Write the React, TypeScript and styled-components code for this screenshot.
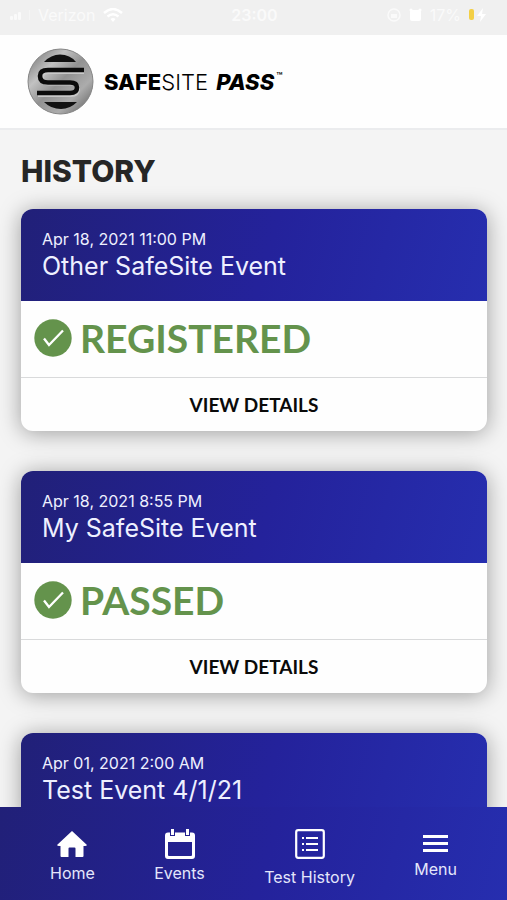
import React from "react";
import styled, { createGlobalStyle } from "styled-components";

const GlobalStyle = createGlobalStyle`
  *, *::before, *::after { box-sizing: border-box; }
  body {
    margin: 0;
    font-family: Inter, "Liberation Sans", sans-serif;
    background: #f4f4f4;
  }
`;

const Screen = styled.div`
  display: flex;
  flex-direction: column;
  height: 100vh;
  overflow: hidden;
`;

const StatusBar = styled.div`
  display: grid;
  grid-template-columns: 1fr auto 1fr;
  align-items: center;
  flex: none;
  height: 35px;
  padding: 0 20px 5px 10px;
  background: #f0f0f0;
  color: #fafafa;
  font-size: 16px;
  line-height: 20px;
`;

const StatusGroup = styled.div<{ $end?: boolean }>`
  display: flex;
  align-items: center;
  gap: 8px;
  justify-content: ${(p) => (p.$end ? "flex-end" : "flex-start")};
`;

const Clock = styled.span`
  padding-left: 12px;
  font-weight: 600;
`;

const Header = styled.header`
  display: flex;
  align-items: center;
  gap: 10px;
  flex: none;
  height: 95px;
  padding: 0 27px;
  background: #fefefe;
  border-bottom: 2px solid #ebecee;
`;

const Brand = styled.span`
  display: flex;
  color: #000;
  font-size: 22px;
  line-height: 28px;
  font-weight: 300;
  white-space: pre;

  strong { font-weight: 800; }
  em { padding-left: 2px; font-weight: 800; }
  sup { padding-left: 2px; font-size: 10px; line-height: 16px; font-weight: 600; }
`;

const Main = styled.main`
  flex: 1;
  min-height: 0;
  overflow: hidden;
  padding: 23px 20px 0 21px;
`;

const PageTitle = styled.h1`
  margin: 0 0 20px;
  color: #262626;
  font-size: 30px;
  line-height: 36px;
  font-weight: 800;
`;

const CardList = styled.div`
  display: flex;
  flex-direction: column;
  gap: 40px;
`;

const Card = styled.article`
  flex: none;
  border-radius: 12px;
  background: #fefefe;
  box-shadow: 0 2px 22px rgba(0, 0, 0, 0.36);
`;

const CardHeader = styled.div`
  height: 92px;
  padding: 20px 21px 0;
  border-radius: 12px 12px 0 0;
  background: linear-gradient(105deg, #212078 0%, #24229b 53%, #262eaf 100%);
  color: #eef0ff;
`;

const EventDate = styled.time`
  display: block;
  font-size: 16px;
  line-height: 20px;
`;

const EventName = styled.h2`
  margin: 0;
  font-size: 25px;
  line-height: 34px;
  font-weight: 400;
`;

const CardStatus = styled.div`
  display: flex;
  align-items: center;
  gap: 8px;
  height: 76px;
  padding: 0 13px 2px;
  color: #64934c;
  font-family: Lato, "Liberation Sans", sans-serif;
  font-size: 39px;
  line-height: 48px;
  font-weight: 700;
`;

const DetailsButton = styled.button`
  display: block;
  width: 100%;
  height: 54px;
  padding: 0;
  border: 0;
  border-top: 1px solid #d9dadb;
  border-radius: 0 0 12px 12px;
  background: transparent;
  color: #0a0a0a;
  font-family: Lato, "Liberation Sans", sans-serif;
  font-size: 19px;
  line-height: 24px;
  font-weight: 700;
  cursor: pointer;
`;

const TabBar = styled.nav`
  display: flex;
  align-items: center;
  justify-content: space-between;
  flex: none;
  position: relative;
  height: 93px;
  padding: 0 50px;
  background: linear-gradient(105deg, #212078 0%, #24229b 53%, #262eaf 100%);
`;

const Tab = styled.a`
  display: flex;
  flex-direction: column;
  align-items: center;
  color: #e4e6fb;
  font-size: 16px;
  line-height: 20px;
  text-decoration: none;
`;

const TabIcon = styled.span<{ $height: number }>`
  display: flex;
  align-items: center;
  height: ${(p) => p.$height}px;
  color: #fff;
`;

const Logo = () => (
  <svg width="67" height="67" viewBox="0 0 67 67" aria-hidden="true">
    <defs>
      <linearGradient id="metal" x1="0" y1="0" x2="1" y2="1">
        <stop offset="0" stopColor="#686868" />
        <stop offset="0.3" stopColor="#c2c2c2" />
        <stop offset="0.5" stopColor="#929292" />
        <stop offset="0.72" stopColor="#acacac" />
        <stop offset="1" stopColor="#555" />
      </linearGradient>
    </defs>
    <circle cx="33.500" cy="33.500" r="32.500" fill="url(#metal)" stroke="#858585" strokeWidth="1" />
    <path d="M17 14 Q24 6.500 33 6.500 Q43 6.500 49 14 Z" fill="#111" />
    <path d="M17 54 H50 Q43 61 34 61 Q24 61 17 54 Z" fill="#111" />
    <path
      d="M57 24 H22 Q15 24 15 29 Q15 35.500 22 35.500 H44 Q51 35.500 51 40.500 Q51 47 44 47 H11"
      fill="none"
      stroke="#c8c8c8"
      strokeWidth="4"
    />
    <path
      d="M57 22 H21 Q13 22 13 28 Q13 34.500 21 34.500 H43 Q50 34.500 50 39.500 Q50 45 43 45 H10"
      fill="none"
      stroke="#0c0c0c"
      strokeWidth="4.600"
    />
  </svg>
);

const SignalIcon = () => (
  <svg width="20" height="12" viewBox="0 0 20 12" fill="currentColor" aria-hidden="true">
    <rect x="0" y="7" width="3" height="4" rx="1" />
    <rect x="4" y="5" width="3" height="6" rx="1" />
    <rect x="8" y="3" width="3" height="8" rx="1" />
    <rect x="19" y="1" width="1" height="10" opacity="0.500" />
  </svg>
);

const WifiIcon = () => (
  <svg width="20" height="14" viewBox="0 0 20 14" aria-hidden="true">
    <path d="M1 5 Q10 -3 19 5 M4.500 8.500 Q10 4 15.500 8.500" fill="none" stroke="#fff" strokeWidth="2.400" />
    <path d="M7.500 11 Q10 9 12.500 11 L10 14 Z" fill="#fff" />
  </svg>
);

const LockIcon = () => (
  <svg width="14" height="14" viewBox="0 0 14 14" aria-hidden="true">
    <circle cx="7" cy="7" r="6" fill="none" stroke="currentColor" strokeWidth="1.500" />
    <rect x="4" y="6" width="6" height="4" fill="currentColor" />
  </svg>
);

const AlarmIcon = () => (
  <svg width="13" height="14" viewBox="0 0 13 14" fill="#fff" aria-hidden="true">
    <rect x="1" y="2" width="11" height="11" rx="2" />
    <circle cx="2" cy="2" r="1.500" />
    <circle cx="11" cy="2" r="1.500" />
  </svg>
);

const BatteryIcon = () => (
  <svg width="18" height="14" viewBox="0 0 18 14" aria-hidden="true">
    <rect x="0" y="1" width="5" height="11" rx="2" fill="#f3cf45" />
    <path d="M14 0 L8 8 H12 L11 14 L17 6 H13 Z" fill="#fff" />
  </svg>
);

const CheckIcon = () => (
  <svg width="38" height="38" viewBox="0 0 38 38" aria-hidden="true">
    <circle cx="19" cy="19" r="18.700" fill="#64934c" />
    <path d="M10 19.500 L15 26 L29 11.500" fill="none" stroke="#fff" strokeWidth="2.300" />
  </svg>
);

const HomeIcon = () => (
  <svg width="30" height="28" viewBox="0 0 30 28" fill="currentColor" aria-hidden="true">
    <path d="M15 1 L30 15 Q29.500 16 28 16 H26.500 V26 Q26.500 27 25.500 27 H18.500 V18.500 Q18.500 17.500 17.500 17.500 H12.500 Q11.500 17.500 11.500 18.500 V27 H4.500 Q3.500 27 3.500 26 V16 H2 Q0.500 16 0 15 Z" />
  </svg>
);

const CalendarIcon = () => (
  <svg width="30" height="30" viewBox="0 0 30 30" fill="currentColor" aria-hidden="true">
    <path
      fillRule="evenodd"
      d="M3 3.500 H5 V7 H10 V3.500 H20 V7 H25 V3.500 H27 Q30 3.500 30 6.500 V27 Q30 30 27 30 H3 Q0 30 0 27 V6.500 Q0 3.500 3 3.500 Z M3 13 V26 Q3 27 4 27 H26 Q27 27 27 26 V13 Z"
    />
    <rect x="6" y="0" width="3" height="6" />
    <rect x="21" y="0" width="3" height="6" />
  </svg>
);

const ListIcon = () => (
  <svg width="30" height="30" viewBox="0 0 30 30" fill="currentColor" aria-hidden="true">
    <rect x="1.200" y="1.200" width="27.600" height="27.600" rx="2" fill="none" stroke="currentColor" strokeWidth="2.200" />
    <path d="M7 8 h2 v2 h-2z M7 14 h2 v2 h-2z M7 20 h2 v2 h-2z M11 8 h12 v2 h-12z M11 14 h12 v2 h-12z M11 20 h12 v2 h-12z" />
  </svg>
);

const MenuIcon = () => (
  <svg width="26" height="18" viewBox="0 0 26 18" fill="currentColor" aria-hidden="true">
    <rect x="0" y="0" width="25" height="3" />
    <rect x="0" y="7" width="25" height="3" />
    <rect x="0" y="14" width="25" height="3" />
  </svg>
);

const events = [
  { date: "Apr 18, 2021 11:00 PM", name: "Other SafeSite Event", status: "REGISTERED" },
  { date: "Apr 18, 2021 8:55 PM", name: "My SafeSite Event", status: "PASSED" },
  { date: "Apr 01, 2021 2:00 AM", name: "Test Event 4/1/21", status: "" },
];

const tabs = [
  { label: "Home", Icon: HomeIcon, height: 38 },
  { label: "Events", Icon: CalendarIcon, height: 38 },
  { label: "Test History", Icon: ListIcon, height: 46 },
  { label: "Menu", Icon: MenuIcon, height: 30 },
];

export default function App() {
  return (
    <Screen>
      <GlobalStyle />
      <StatusBar>
        <StatusGroup>
          <SignalIcon />
          <span>Verizon</span>
          <WifiIcon />
        </StatusGroup>
        <Clock>23:00</Clock>
        <StatusGroup $end>
          <LockIcon />
          <AlarmIcon />
          <span>17%</span>
          <BatteryIcon />
        </StatusGroup>
      </StatusBar>
      <Header>
        <Logo />
        <Brand>
          <strong>SAFE</strong>SITE <em>PASS</em>
          <sup>™</sup>
        </Brand>
      </Header>
      <Main>
        <PageTitle>HISTORY</PageTitle>
        <CardList>
          {events.map((event) => (
            <Card key={event.date}>
              <CardHeader>
                <EventDate>{event.date}</EventDate>
                <EventName>{event.name}</EventName>
              </CardHeader>
              {event.status && (
                <>
                  <CardStatus>
                    <CheckIcon />
                    <span>{event.status}</span>
                  </CardStatus>
                  <DetailsButton type="button">VIEW DETAILS</DetailsButton>
                </>
              )}
            </Card>
          ))}
        </CardList>
      </Main>
      <TabBar>
        {tabs.map(({ label, Icon, height }) => (
          <Tab key={label} href="#">
            <TabIcon $height={height}>
              <Icon />
            </TabIcon>
            {label}
          </Tab>
        ))}
      </TabBar>
    </Screen>
  );
}
